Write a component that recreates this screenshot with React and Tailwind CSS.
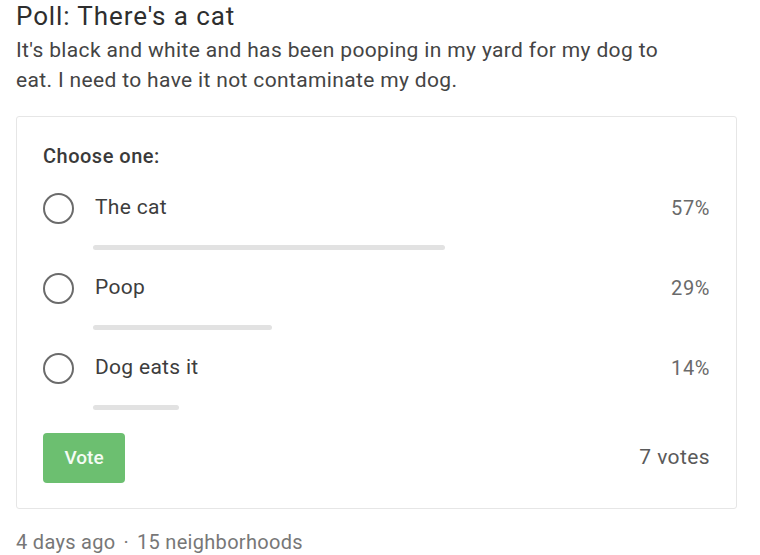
import React from "react";

const options = [
  { label: "The cat", pct: 57 },
  { label: "Poop", pct: 29 },
  { label: "Dog eats it", pct: 14 },
];

const App = () => {
  return (
    <div className="min-h-screen bg-white pl-4 pr-[23px] font-['Roboto',sans-serif]">
      {/* Header */}
      <h1 className="text-[26px] leading-[32px] tracking-[0.9px] text-[#2e2e2e]">Poll: There's a cat</h1>
      <p className="mt-[3px] text-[21px] leading-[30px] tracking-[0.35px] text-[#444]">
        It's black and white and has been pooping in my yard for my dog to
        <br />
        eat. I need to have it not contaminate my dog.
      </p>

      {/* Poll card */}
      <div className="mt-[21px] border border-[#e6e6e6] rounded-[3px] px-[26px] pt-[27px] pb-[25px]">
        <div className="text-[20px] leading-[24px] tracking-[0.5px] font-medium text-[#3a3a3a]">Choose one:</div>

        <div className="mt-[25px]">
          {options.map((o) => (
            <div key={o.label} className="pb-[23px]">
              <div className="flex items-center h-[30px]">
                <div className="w-[31px] h-[31px] rounded-full border-2 border-[#6b6b6b]" />
                <span className="ml-[21px] text-[21px] tracking-[0.3px] text-[#3d3d3d]">{o.label}</span>
                <span className="ml-auto text-[20px] tracking-[0.6px] text-[#6a6a6a]">{o.pct}%</span>
              </div>
              <div className="mt-[22px] ml-[50px] h-[5px]">
                <div className="h-full rounded-full bg-[#e2e2e2]" style={{ width: `${o.pct}%` }} />
              </div>
            </div>
          ))}
        </div>

        <div className="flex items-center justify-between">
          <button className="w-[82px] h-[50px] rounded-[4px] bg-[#6cbf70] text-[#f4fbf4] text-[19px] font-medium">
            Vote
          </button>
          <span className="text-[21px] tracking-[0.4px] text-[#5a5a5a]">7 votes</span>
        </div>
      </div>

      {/* Footer */}
      <div className="mt-[19px] flex items-center text-[20px] leading-[28px] tracking-[0.3px] text-[#777]">
        <span>4 days ago</span>
        <span className="mx-[8px]">·</span>
        <span>15 neighborhoods</span>
      </div>
    </div>
  );
};

export default App;
